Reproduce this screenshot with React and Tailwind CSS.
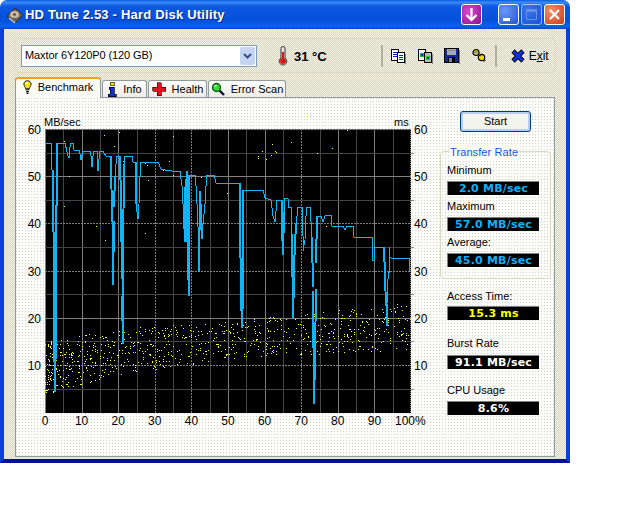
import React from "react";

const UI = "font-['Liberation_Sans',Arial,sans-serif]";

// trace points read off the reference, [page x, page y]
const trace = [
  [45, 153], [46, 144], [51, 144], [51, 153], [52, 171], [53, 171], [53, 233], [54, 233], [54, 332], [55, 393], [56, 330], [56, 206],
  [57, 206], [57, 144], [65, 144], [67, 153], [68, 157], [69, 159], [70, 148], [71, 144], [73, 144], [74, 151], [79, 151], [80, 155], [81, 161],
  [83, 152], [90, 152], [91, 157], [92, 168], [93, 157], [94, 152], [97, 152], [97, 162], [98, 172], [99, 160], [100, 152], [103, 152], [106, 157],
  [111, 157], [112, 222], [113, 222], [113, 286], [114, 222], [114, 208], [115, 177], [116, 165], [117, 157], [120, 157], [121, 203], [122, 280], [122, 297],
  [123, 345], [123, 257], [124, 165], [125, 157], [132, 157], [133, 163], [136, 163], [136, 205], [138, 220], [139, 205], [140, 178], [140, 163],
  [158, 163], [161, 170], [165, 171], [172, 172], [180, 172], [182, 187], [183, 205], [184, 230], [185, 243], [185, 188], [187, 172], [187, 243],
  [188, 265], [189, 297], [189, 237], [189, 176], [195, 176], [196, 187], [197, 205], [198, 228], [199, 233], [199, 273], [200, 192], [201, 205],
  [202, 240], [203, 225], [205, 205], [206, 187], [207, 176], [214, 176], [216, 184], [230, 184], [240, 184], [240, 222], [241, 293], [242, 329], [243, 293],
  [243, 225], [243, 191], [263, 191], [265, 199], [271, 201], [273, 217], [275, 223], [277, 201], [282, 201], [282, 242], [283, 256], [284, 213],
  [285, 199], [288, 200], [288, 208], [291, 208], [291, 235], [292, 235], [293, 319], [294, 299], [294, 267], [296, 225], [297, 217], [298, 208], [302, 208],
  [303, 237], [303, 252], [305, 241], [306, 217], [307, 208], [310, 208], [312, 238], [313, 288], [313, 292], [314, 405], [315, 358], [316, 290], [316, 264],
  [317, 217], [321, 217], [323, 223], [325, 217], [331, 216], [332, 227], [343, 227], [345, 231], [347, 227], [353, 227], [354, 238], [372, 238],
  [373, 262], [374, 261], [375, 248], [384, 248], [386, 307], [387, 327], [387, 305], [388, 280], [388, 273], [389, 273], [389, 248], [390, 258], [391, 259], [409, 259], [410, 272], [411, 272],
];

// the long drops read 2px wide in the reference, the flat runs only 1px
const dropSegments = trace.slice(1).map((p, i) => [trace[i], p]).filter(([a, b]) => Math.abs(b[1] - a[1]) > 30);

const sparse = [
  [64, 142], [69, 177], [64, 207], [104, 136], [119, 133], [114, 147], [96, 227], [105, 241], [92, 162], [97, 162], [123, 162], [119, 175], [124, 179],
  [145, 164], [147, 166], [148, 181], [145, 234], [169, 162], [173, 137], [163, 171], [173, 176], [201, 178], [258, 157], [258, 159], [266, 160], [272, 145], [275, 152],
  [276, 153], [291, 143], [317, 154], [332, 149], [347, 131], [227, 194], [326, 227], [310, 116], [271, 156], [262, 152],
];

// piecewise edges of the scatter band, t runs 0..1 across the plot
const bandEdge = (t, a, b, c, d) => {
  if (t < 0.2) return a + (b - a) * (t / 0.2);
  if (t < 0.5) return b + (c - b) * ((t - 0.2) / 0.3);
  return c + (d - c) * ((t - 0.5) / 0.5);
};

// seeded so the scatter stays the same on every render
const makeDots = () => {
  let seed = 20531;
  const rnd = () => {
    seed = (seed * 16807) % 2147483647;
    return seed / 2147483647;
  };
  const dots = [];
  for (let i = 0; i < 820; i++) {
    const t = Math.pow(rnd(), 1.3);
    const lo = bandEdge(t, 343, 330, 322, 303);
    const hi = bandEdge(t, 395, 376, 360, 350);
    dots.push([Math.round(45 + 366 * t), Math.round(lo + (hi - lo) * rnd())]);
  }
  return dots;
};
const dots = makeDots();

const yLabels = [
  [60, 130], [50, 177], [40, 224], [30, 272], [20, 319], [10, 366],
];
const xLabels = [0, 10, 20, 30, 40, 50, 60, 70, 80, 90];

const BenchmarkChart = () => (
  <svg width="414" height="320" viewBox="16 110 414 320" className="shrink-0" fontFamily="'Liberation Sans', Arial, sans-serif" fill="#000">
    <rect x="45" y="130" width="366" height="284" fill="#000" />
    <g shapeRendering="crispEdges" strokeWidth="1">
      {[0, 1, 2, 3, 4, 5, 6, 7, 8, 9, 10, 11, 12, 13, 14, 15, 16, 17, 18, 19].map((i) => {
        const x = Math.round(45 + i * 18.3) + 0.5;
        const major = i % 2 === 0;
        return (
          <line key={i} x1={x} x2={x} y1="130" y2="414" stroke={major ? "#7c7c7c" : "#444444"} strokeDasharray={i === 6 || i === 8 || i === 14 ? "2 1" : undefined} />
        );
      })}
      {[1, 2, 3, 4, 5, 6, 7, 8, 9, 10, 11].map((i) => {
        const y = Math.round(130 + i * 23.6) + 0.5;
        const major = i % 2 === 0;
        return (
          <g key={i}>
            <line x1="45" x2="411" y1={y} y2={y} stroke={major ? "#808080" : "#444444"} strokeDasharray={i === 4 || i === 6 || i === 10 ? "2 1" : undefined} />
            {!major && <line x1="411" x2="414" y1={y} y2={y} stroke="#8a8a8a" />}
          </g>
        );
      })}
      <line x1="45" x2="411" y1="130.5" y2="130.5" stroke="#707070" />
      <line x1="410.5" x2="410.5" y1="130" y2="414" stroke="#808080" strokeDasharray="1 1" />
      {dots.map(([x, y], i) => (
        <rect key={i} x={x} y={y} width="1" height="1" fill="#ffff20" />
      ))}
      {sparse.map(([x, y], i) => (
        <rect key={i} x={x} y={y} width="1" height="1" fill="#ffff20" />
      ))}
      <polyline points={trace.map((p) => p.join(",")).join(" ")} fill="none" stroke="#12b4f4" strokeWidth="1" />
      {dropSegments.map(([a, b], i) => (
        <line key={i} x1={a[0]} y1={a[1]} x2={b[0]} y2={b[1]} stroke="#12b4f4" strokeWidth="2" />
      ))}
    </g>
    <text x="44" y="127" fontSize="11">MB/sec</text>
    <text x="394" y="127" fontSize="11">ms</text>
    {yLabels.map(([v, y]) => (
      <g key={v} fontSize="12">
        <text x="41" y={y + 5} textAnchor="end">{v}</text>
        <text x="414" y={y + 5}>{v}</text>
      </g>
    ))}
    {xLabels.map((v, i) => (
      <text key={v} x={45 + i * 36.6} y="426" fontSize="12" textAnchor="middle">{v}</text>
    ))}
    <text x="395" y="426" fontSize="12">100%</text>
  </svg>
);

const Lcd = ({ color, children }) => (
  <div className={`h-[14px] w-[92px] bg-black border-t border-l border-[#808080] flex items-center justify-center font-['DejaVu_Sans',sans-serif] font-bold text-[11px] leading-none tracking-[0.2px] ${color}`}>
    {children}
  </div>
);

const Stat = ({ label, color, children, className = "", gap = "mt-[4px]" }) => (
  <div className={className}>
    <div className="text-[11px] leading-[13px] text-black h-[13px]">{label}</div>
    <div className={gap}><Lcd color={color}>{children}</Lcd></div>
  </div>
);

const BulbIcon = () => (
  <svg width="9" height="15" viewBox="0 0 10 16">
    <path d="M5 .5C2.500.5 1 2.300 1 4.200c0 2 1.600 3 2 5.300h4c.4-2.300 2-3.300 2-5.300C9 2.300 7.500.5 5 .5z" fill="#ffe800" stroke="#000" />
    <path d="M3 10.500h4M3.500 12.500h3M4 14.500h2" stroke="#000" strokeWidth="1.300" />
    <rect x="3" y="2" width="2" height="2" fill="#fff" />
  </svg>
);

const InfoIcon = () => (
  <svg width="10" height="16" viewBox="0 0 10 16" shapeRendering="crispEdges">
    <rect x="3" y="1" width="4" height="3" fill="#ffe400" stroke="#000" strokeWidth=".6" />
    <path d="M2 6h5v7h2v2.500H1V13h2V8H2z" fill="#1030d8" stroke="#000" strokeWidth=".7" />
  </svg>
);

const CrossIcon = () => (
  <svg width="14" height="14" viewBox="0 0 14 14" shapeRendering="crispEdges">
    <path d="M5 .5h4v4.500h4.500v4H9v4.500H5V9H.5V5H5z" fill="#e4121e" stroke="#400" strokeWidth=".7" />
  </svg>
);

const ScanIcon = () => (
  <svg width="14" height="14" viewBox="0 0 14 14">
    <path d="M8 8l5 5" stroke="#101030" strokeWidth="2.400" />
    <circle cx="5.500" cy="5.500" r="4" fill="#30d838" stroke="#186018" strokeWidth="1.400" />
    <rect x="3.500" y="3" width="2" height="2" fill="#c8ffc8" />
  </svg>
);

const CopyIcon = ({ green }) => (
  <svg width="16" height="16" viewBox="0 0 16 16" shapeRendering="crispEdges">
    <rect x="1.500" y="1.500" width="7" height="11" fill="#fff" stroke="#000" />
    <rect x="7.500" y="4.500" width="7" height="10" fill={green ? "#b8b8b8" : "#fff"} stroke="#000" />
    <rect x="15" y="6" width="1" height="10" fill="#808080" />
    {green ? (
      <g>
        <rect x="3" y="5" width="4" height="4" fill="#20c020" />
        <rect x="9" y="8" width="4" height="4" fill="#20d020" />
        <rect x="4" y="6" width="2" height="2" fill="#0028d0" />
        <rect x="10" y="9" width="2" height="2" fill="#0028d0" />
      </g>
    ) : (
      <path d="M3 4.500h4M3 6.500h4M3 8.500h4M9 7.500h4M9 9.500h4M9 11.500h4" stroke="#0028d0" />
    )}
  </svg>
);

const SaveIcon = () => (
  <svg width="16" height="16" viewBox="0 0 16 16" shapeRendering="crispEdges">
    <rect x="0.500" y="0.500" width="14" height="14" fill="#1028a0" stroke="#000" />
    <rect x="3" y="1" width="9" height="6" fill="#a8a8a8" />
    <rect x="4" y="2" width="7" height="1" fill="#888" />
    <rect x="4" y="9" width="7" height="5" fill="#000" />
    <rect x="5" y="10" width="3" height="4" fill="#7080c8" />
    <rect x="15" y="2" width="1" height="14" fill="#808080" />
  </svg>
);

const KeysIcon = () => (
  <svg width="16" height="15" viewBox="0 0 16 15">
    <circle cx="5" cy="4.500" r="3" fill="#e0c800" stroke="#000" strokeWidth="1.200" />
    <circle cx="10.500" cy="9.500" r="3.200" fill="#f0dc00" stroke="#000" strokeWidth="1.200" />
    <path d="M6 1.500l2 2M8 6l2 2M12.500 13.500l2-1.500" stroke="#404000" strokeWidth="1.400" />
    <rect x="3" y="3" width="3" height="2" fill="#909090" />
  </svg>
);

const ExitIcon = () => (
  <svg width="14" height="14" viewBox="0 0 14 14">
    <path d="M2 2l10 10M12 2L2 12" stroke="#000" strokeWidth="4.600" />
    <path d="M2.500 2.500l9 9M11.500 2.500l-9 9" stroke="#0a30e0" strokeWidth="3" />
  </svg>
);

const Thermometer = () => (
  <svg width="10" height="20" viewBox="0 0 10 20">
    <path d="M3 2.500a2 2 0 0 1 4 0V12a3.800 3.800 0 1 1-4 0z" fill="#f0e8e0" stroke="#303030" />
    <rect x="4" y="6" width="2" height="8" fill="#d81818" />
    <circle cx="5" cy="15" r="3" fill="#d81818" />
  </svg>
);

const DiskLogo = () => (
  <svg width="18" height="18" viewBox="0 0 18 18">
    <path d="M1 10L9 2l8 7-8 8z" fill="#6c6458" stroke="#2a2a30" />
    <ellipse cx="8.500" cy="8.500" rx="4.500" ry="3.500" fill="#c8b8a0" />
    <ellipse cx="8.500" cy="8.500" rx="1.500" ry="1.200" fill="#504840" />
    <path d="M3 12l6 5" stroke="#d0d0d8" strokeWidth="1.200" />
  </svg>
);

const TitleButton = ({ className, children }) => (
  <div className={`w-[21px] h-[21px] rounded-[3px] border border-white flex items-center justify-center ${className}`}>
    {children}
  </div>
);

const TitleBar = () => (
  <div className="h-[29px] shrink-0 rounded-t-[7px] flex items-center pl-[6px] pr-[5px] bg-[linear-gradient(180deg,#0a5ae6_0%,#3a8cf4_8%,#0c58e2_22%,#0650da_70%,#0a62ec_90%,#0648c8_100%)]">
    <DiskLogo />
    <span className="ml-[1px] font-bold text-[13px] tracking-[0.2px] whitespace-nowrap text-white [text-shadow:1px_1px_0_#0a2a80]">
      HD Tune 2.53 - Hard Disk Utility
    </span>
    <TitleButton className="ml-auto rounded-[2px] bg-[radial-gradient(circle_at_35%_35%,#d84cc8,#8c1090)]">
      <svg width="15" height="15" viewBox="0 0 15 15"><path d="M7.500 1v12M2.500 8l5 5 5-5" fill="none" stroke="#fff" strokeWidth="2.200" /></svg>
    </TitleButton>
    <TitleButton className="ml-[16px] bg-[radial-gradient(circle_at_30%_30%,#6a98f8,#2450d8)]">
      <span className="mt-[10px] mr-[4px] w-[7px] h-[3px] bg-white" />
    </TitleButton>
    <TitleButton className="ml-[2px] opacity-60 bg-[radial-gradient(circle_at_30%_30%,#5a88f0,#2450d8)]">
      <span className="w-[11px] h-[11px] border border-[#a0b8f0] border-t-[3px]" />
    </TitleButton>
    <TitleButton className="ml-[2px] bg-[radial-gradient(circle_at_30%_30%,#f09070,#d03c14)]">
      <svg width="13" height="13" viewBox="0 0 13 13"><path d="M2 2l9 9M11 2l-9 9" stroke="#fff" strokeWidth="2.200" /></svg>
    </TitleButton>
  </div>
);

const Separator = () => <div className="w-[2px] h-[22px] bg-[#b0aea0]" />;

const Toolbar = () => (
  <div className="mt-[9px] ml-[10px] w-[542px] h-[35px] shrink-0 rounded-[5px] border border-[#dbd8c6] flex items-center">
    <div className="ml-[6px] w-[236px] h-[22px] bg-white border border-[#7f9db9] flex items-center pl-[3px] text-[11px] text-black">
      <span className="tracking-[-0.1px]">Maxtor 6Y120P0 (120 GB)</span>
      <div className="ml-auto mr-px w-[15px] h-[18px] rounded-[2px] bg-[#c6d4f4] flex items-center justify-center">
        <svg width="9" height="6" viewBox="0 0 9 6"><path d="M1 1l3.500 3.500L8 1" fill="none" stroke="#3c5080" strokeWidth="2" /></svg>
      </div>
    </div>
    <div className="ml-[21px]"><Thermometer /></div>
    <span className="ml-[6px] mt-[2px] text-[13px] font-bold text-black">31 °C</span>
    <div className="ml-[54px]"><Separator /></div>
    <div className="ml-[7px] flex items-center gap-[11px]">
      <CopyIcon />
      <CopyIcon green />
      <SaveIcon />
      <KeysIcon />
    </div>
    <div className="ml-[8px]"><Separator /></div>
    <div className="ml-[14px] flex items-center">
      <ExitIcon />
      <span className="ml-[4px] text-[12px] text-black">E<span className="underline">x</span>it</span>
    </div>
  </div>
);

const Tab = ({ active, width, icon, label }) => (
  <div
    className={`${width} flex items-center justify-center gap-[6px] whitespace-nowrap rounded-t-[3px] border border-[#919b9c] border-b-0 text-[11px] text-black ${
      active
        ? "h-[21px] relative z-10 border-t-0 bg-[#fbfbf6] shadow-[inset_0_2px_0_#f0a020]"
        : "h-[17px] mb-[1px] bg-[linear-gradient(180deg,#fff,#ecebe4)]"
    }`}
  >
    {icon}
    <span>{label}</span>
  </div>
);

const Tabs = () => (
  <div className="mt-[4px] ml-[11px] h-[21px] shrink-0 flex items-end gap-px -mb-px relative">
    <Tab active width="w-[86px]" icon={<BulbIcon />} label="Benchmark" />
    <Tab width="w-[45px]" icon={<InfoIcon />} label="Info" />
    <Tab width="w-[59px]" icon={<CrossIcon />} label="Health" />
    <Tab width="w-[78px]" icon={<ScanIcon />} label="Error Scan" />
  </div>
);

const RightColumn = () => (
  <div className="ml-[10px] w-[111px] text-[11px] text-black">
    <div className="mt-[13px] ml-[20px] w-[71px] h-[21px] rounded-[3px] border border-[#003c74] bg-[#f4f4ee] shadow-[inset_0_0_0_2px_#b8cef0] flex items-center justify-center text-[11px]">
      Start
    </div>
    <div className="relative mt-[19px] h-[128px] rounded-[4px] border border-[#d8d8c0] pl-[6px] pt-[12px]">
      <span className="absolute -top-[7px] left-[8px] px-px text-[11px] leading-[14px] tracking-[0.1px] text-[#0a5ae0] bg-[#fbfbf6]">Transfer Rate</span>
      <Stat label="Minimum" color="text-[#10b0f8]">2.0 MB/sec</Stat>
      <Stat label="Maximum" color="text-[#10b0f8]" className="mt-[5px]">57.0 MB/sec</Stat>
      <Stat label="Average:" color="text-[#10b0f8]" className="mt-[5px]">45.0 MB/sec</Stat>
    </div>
    <div className="ml-[7px]">
      <Stat label="Access Time:" color="text-[#ffff00]" className="mt-[11px]" gap="mt-[3px]">15.3 ms</Stat>
      <Stat label="Burst Rate" color="text-white" className="mt-[17px]" gap="mt-[5px]">91.1 MB/sec</Stat>
      <Stat label="CPU Usage" color="text-white" className="mt-[15px]">8.6%</Stat>
    </div>
  </div>
);

const Panel = () => (
  <div className="ml-[11px] w-[540px] h-[360px] shrink-0 border border-[#919b9c] flex items-start bg-[conic-gradient(from_270deg_at_1px_1px,#d2d2d0_25%,#fcfcf8_0)] bg-size-[3px_3px]">
    <div className="mt-[11px]"><BenchmarkChart /></div>
    <RightColumn />
  </div>
);

export default function App() {
  return (
    <div className={`w-[640px] h-[512px] bg-white overflow-hidden ${UI}`}>
      <div className="w-[570px] h-[463px] flex flex-col">
        <TitleBar />
        <div className="flex-1 flex flex-col min-h-0 border-x-4 border-b-4 border-x-[#0a3ed8] border-b-[#00138c] bg-[repeating-conic-gradient(#f4f2e4_0_25%,#d8d5c0_0_50%)] bg-size-[2px_2px]">
          <Toolbar />
          <Tabs />
          <Panel />
        </div>
      </div>
    </div>
  );
}
